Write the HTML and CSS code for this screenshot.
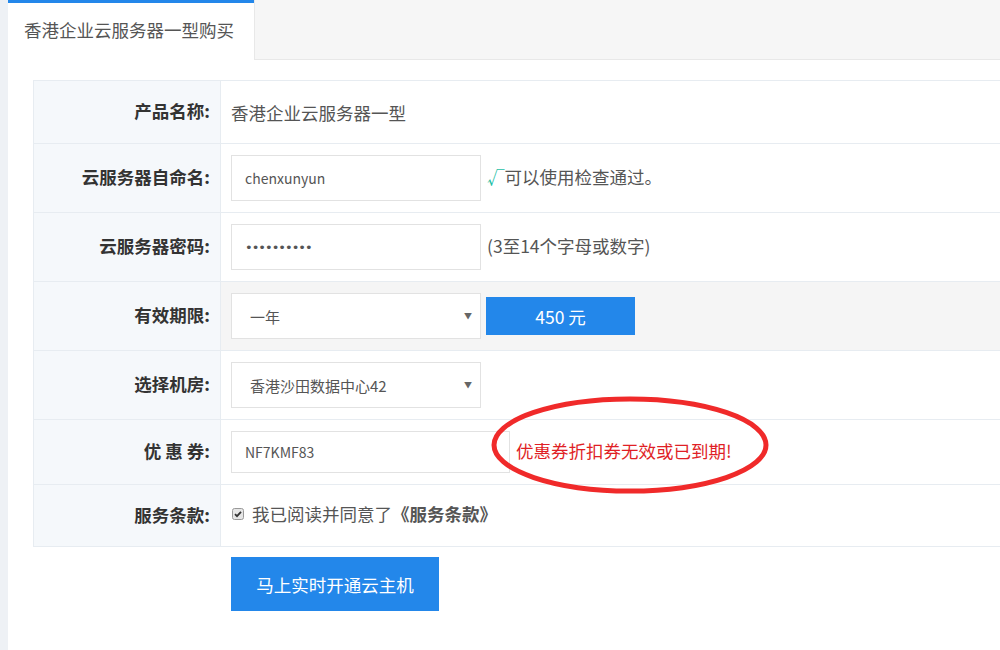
FILE: index.html
```html
<!DOCTYPE html>
<html lang="zh">
<head>
<meta charset="utf-8">
<link rel="stylesheet" href="styles.css">
</head>
<body>
<div class="page">
  <div class="tabs">
    <div class="tab active">香港企业云服务器一型购买</div>
    <div class="tab-rest"></div>
  </div>
  <div class="content">
    <table class="form">
      <tr class="r1">
        <th>产品名称:</th>
        <td class="val">香港企业云服务器一型</td>
      </tr>
      <tr class="r2">
        <th>云服务器自命名:</th>
        <td><div class="line"><div class="input">chenxunyun</div><span class="hint"><span class="ok">√</span>可以使用检查通过。</span></div></td>
      </tr>
      <tr class="r2">
        <th>云服务器密码:</th>
        <td><div class="line"><div class="input pwd">••••••••••</div><span class="hint">(3至14个字母或数字)</span></div></td>
      </tr>
      <tr class="r2 gray">
        <th>有效期限:</th>
        <td><div class="line"><div class="input select">一年<span class="arrow">▼</span></div><div class="price">450 元</div></div></td>
      </tr>
      <tr class="r2">
        <th>选择机房:</th>
        <td><div class="line"><div class="input select">香港沙田数据中心42<span class="arrow">▼</span></div></div></td>
      </tr>
      <tr class="r6">
        <th>优&nbsp;惠&nbsp;券:</th>
        <td><div class="line"><div class="input coupon">NF7KMF83</div><span class="err">优惠券折扣券无效或已到期!</span></div></td>
      </tr>
      <tr class="r7">
        <th>服务条款:</th>
        <td><div class="line agree"><span class="check"><svg width="12" height="12" viewBox="0 0 12 12"><rect x="0.5" y="0.5" width="11" height="11" rx="2" fill="#e6e6e6" stroke="#999"/><path d="M3 6.2 L5 8.2 L9 3.8" fill="none" stroke="#333" stroke-width="1.8"/></svg></span>我已阅读并同意了<b>《服务条款》</b></div></td>
      </tr>
    </table>
    <div class="actions"><div class="submit">马上实时开通云主机</div></div>
  </div>
  <svg class="ring" width="290" height="104" viewBox="0 0 290 104"><ellipse cx="145" cy="52" rx="136" ry="46" fill="none" stroke="#f02a2a" stroke-width="5"/></svg>
</div>
</body>
</html>
```
FILE: styles.css
```css
html, body { margin: 0; padding: 0; }
body {
  background: #eef1f5;
  font-family: "Noto Sans CJK SC", "Noto Sans", sans-serif;
  color: #555;
}
.page {
  position: relative;
  margin-left: 8px;
  height: 650px;
  background: #fff;
  overflow: hidden;
}
.tabs {
  display: flex;
  height: 60px;
}
.tab {
  width: 246px;
  box-sizing: border-box;
  border-top: 3px solid #2387ea;
  background: #fff;
  font-size: 17.5px;
  color: #555;
  padding: 14px 0 0 16px;
  line-height: 26px;
}
.tab-rest {
  flex: 1;
  background: #f6f6f6;
  border-left: 1px solid #e8e8e8;
  border-bottom: 1px solid #e8e8e8;
  box-sizing: border-box;
}
.content {
  padding: 20px 0 0 25px;
}
.form {
  border-collapse: collapse;
  width: 1000px;
}
.form th, .form td {
  border: 1px solid #e7ecf1;
  padding: 0;
}
.form th {
  width: 187px;
  background: #f5f8fb;
  text-align: right;
  padding: 0 10px 3px 0;
  font-size: 17.5px;
  font-weight: bold;
  color: #333;
  box-sizing: border-box;
}
.form td {
  padding-left: 10px;
  font-size: 17.5px;
  color: #555;
}
.val { padding-bottom: 3px; }
.r1 { height: 63px; }
.r2 { height: 69px; }
.r6 { height: 65px; }
.r7 { height: 62px; }
.gray td { background: #f5f5f5; }
.line {
  display: flex;
  align-items: center;
}
.hint, .err, .agree { position: relative; top: -2px; }
.input {
  width: 250px;
  height: 46px;
  box-sizing: border-box;
  border: 1px solid #e2e2e2;
  background: #fff;
  padding-left: 13px;
  font-size: 14px;
  color: #555;
  display: flex;
  align-items: center;
  position: relative;
}
.pwd {
  font-family: "DejaVu Sans", sans-serif;
  font-size: 13px;
  letter-spacing: -1px;
  color: #555;
}
.select { padding-left: 18px; font-size: 15px; }
.arrow {
  position: absolute;
  right: 8px;
  top: 16px;
  font-size: 8px;
  color: #666;
}
.coupon { width: 279px; height: 42px; }
.hint { margin-left: 6px; }
.ok { color: #1fc0a6; }
.price {
  margin-left: 5px;
  width: 149px;
  height: 38px;
  background: #2387ea;
  color: #fff;
  font-size: 17.5px;
  display: flex;
  align-items: center;
  justify-content: center;
}
.err { margin-left: 6px; color: #e01f26; }
.agree { font-size: 17.5px; }
.check { display: inline-flex; margin: 0 8px 0 1px; }
.agree b { color: #555; }
.actions {
  padding: 10px 0 0 198px;
}
.submit {
  width: 208px;
  height: 54px;
  background: #2387ea;
  color: #fff;
  font-size: 17.5px;
  display: flex;
  align-items: center;
  justify-content: center;
}
.ring {
  position: absolute;
  left: 477px;
  top: 393px;
}
```
